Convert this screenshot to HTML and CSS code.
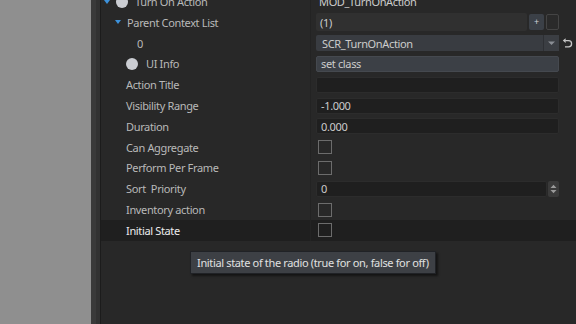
FILE: index.html
```html
<!DOCTYPE html>
<html>
<head>
<meta charset="utf-8">
<link rel="stylesheet" href="styles.css">
</head>
<body>
<div class="app">
  <div class="side"></div>
  <div class="divider"><div class="d1"></div><div class="d2"></div><div class="d3"></div></div>
  <div class="panel">
    <div class="rows">
      <div class="row">
        <div class="label l0"><span class="tri"></span><span class="dot"></span>Turn On Action</div>
        <div class="value"><span class="plain">MOD_TurnOnAction</span></div>
      </div>
      <div class="row">
        <div class="label l1"><span class="tri"></span>Parent Context List</div>
        <div class="value"><div class="field list">(1)</div><div class="btn plus">+</div><div class="btn more"></div><div class="spacer"></div></div>
      </div>
      <div class="row">
        <div class="label l2">0</div>
        <div class="value"><div class="field combo"><span class="ctext">SCR_TurnOnAction</span><span class="carrow"><svg width="9" height="6" viewBox="0 0 9 6"><path d="M1 1.5h7L4.5 5z" fill="#8a8e94"/></svg></span></div>
          <div class="spacer undo"><svg width="11" height="11" viewBox="0 0 11 11"><path d="M3.2 2.6H6.5a3.1 3.1 0 0 1 0 6.2H3" fill="none" stroke="#c8c8c8" stroke-width="1.3"/><path d="M0.8 2.6L3.6 0.3V4.9z" fill="#c8c8c8"/></svg></div></div>
      </div>
      <div class="row">
        <div class="label l1b"><span class="dot"></span>UI Info</div>
        <div class="value"><div class="field light">set class</div><div class="spacer"></div></div>
      </div>
      <div class="row">
        <div class="label">Action Title</div>
        <div class="value"><div class="field dark"></div><div class="spacer"></div></div>
      </div>
      <div class="row">
        <div class="label">Visibility Range</div>
        <div class="value"><div class="field dark">-1.000</div><div class="spacer"></div></div>
      </div>
      <div class="row">
        <div class="label">Duration</div>
        <div class="value"><div class="field dark">0.000</div><div class="spacer"></div></div>
      </div>
      <div class="row">
        <div class="label">Can Aggregate</div>
        <div class="value"><div class="check"></div></div>
      </div>
      <div class="row">
        <div class="label">Perform Per Frame</div>
        <div class="value"><div class="check"></div></div>
      </div>
      <div class="row">
        <div class="label">Sort&nbsp; Priority</div>
        <div class="value"><div class="field dark">0</div><div class="spin"><svg width="7" height="10" viewBox="0 0 7 10"><path d="M0.5 4h6L3.5 0.8z M0.5 6h6L3.5 9.2z" fill="#9a9a9a"/></svg></div><div class="spacer"></div></div>
      </div>
      <div class="row">
        <div class="label">Inventory action</div>
        <div class="value"><div class="check"></div></div>
      </div>
      <div class="row sel">
        <div class="label">Initial State</div>
        <div class="value"><div class="check"></div></div>
      </div>
    </div>
    <div class="tooltip">Initial state of the radio (true for on, false for off)</div>
  </div>
</div>
</body>
</html>
```
FILE: styles.css
```css
* { box-sizing: border-box; }
html, body { margin: 0; padding: 0; width: 576px; height: 324px; overflow: hidden; }
body { font-family: "Noto Sans", "Open Sans", sans-serif; font-size: 11px; letter-spacing: -0.35px; background: #282828; }
.app { display: flex; width: 576px; height: 324px; }
.side { width: 91px; background: #8f8f8f; }
.divider { display: flex; width: 10px; }
.d1 { width: 5px; background: #3a3a3a; }
.d2 { width: 4px; background: #323232; }
.d3 { width: 1px; background: #1c1c1c; }
.panel { position: relative; flex: 1; background: #282828; }
.rows { margin-top: -8.8px; }
.row { display: flex; height: 20.8px; align-items: center; }
.row.sel { background: #1f1f1f; }
.label { width: 210px; height: 100%; display: flex; align-items: center; padding-left: 25px; color: #b9b9b9; border-right: 1px solid #232323; white-space: nowrap; }
.sel .label { color: #ececec; }
.label.l0 { padding-left: 3px; }
.label.l1 { padding-left: 14px; }
.label.l2 { padding-left: 36px; }
.label.l1b { padding-left: 25px; }
.tri { width: 0; height: 0; border-left: 3px solid transparent; border-right: 3px solid transparent; border-top: 4px solid #3d92dc; margin-right: 6px; }
.dot { width: 12px; height: 12px; border-radius: 50%; background: #cbcdd2; margin-right: 7px; }
.l1b .dot { margin-right: 8px; }
.value { flex: 1; height: 100%; display: flex; align-items: center; padding-left: 5px; color: #cccccc; }
.plain { padding-left: 3px; }
.field { flex: 1; height: 16px; border-radius: 2px; display: flex; align-items: center; padding-left: 4px; white-space: nowrap; }
.field.list { background: #303030; height: 18px; }
.field.light { background: #3c4046; border: 1px solid #45494f; }
.field.dark { background: #1f1f1f; border: 1px solid #2c2c2c; }
.field.combo { background: #393c41; padding-left: 0; }
.ctext { flex: 1; padding-left: 6px; }
.carrow { width: 16px; height: 100%; display: flex; align-items: center; justify-content: center; border-left: 1px solid #2e3034; background: #3b3e43; }
.spacer { width: 17px; flex: none; height: 100%; display: flex; align-items: center; justify-content: center; }
.btn { flex: none; height: 16px; margin-left: 2px; border-radius: 2px; }
.btn.plus { width: 15px; background: #3b4047; color: #cfd3d8; font-size: 9px; line-height: 15px; text-align: center; }
.btn.more { width: 13px; border: 1px solid #444; background: #2a2a2a; }
.spin { flex: none; width: 11px; height: 16px; margin-left: 1px; background: #3a3a3a; border-radius: 2px; display: flex; align-items: center; justify-content: center; }
.check { width: 14px; height: 14px; margin-left: 2px; border: 1px solid #6c6c6c; }
.tooltip { position: absolute; left: 89px; top: 251px; height: 23px; padding: 0 6px; display: flex; align-items: center; background: #3d4045; border: 1px solid #202226; color: #e0e0e0; box-shadow: 2px 2px 2px rgba(0,0,0,0.5); white-space: nowrap; }
```
